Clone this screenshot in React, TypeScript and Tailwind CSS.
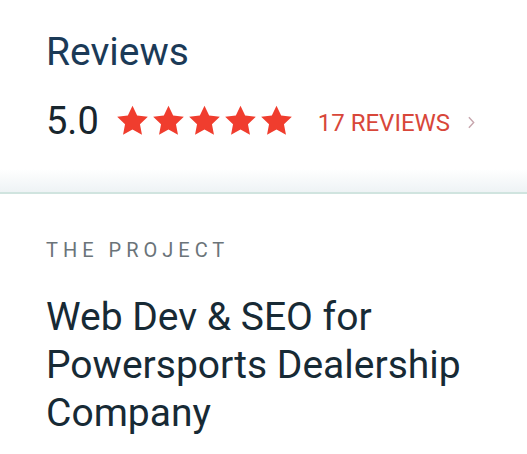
const Star = () => (
  <svg viewBox="0 0 24 24" className="w-[33px] h-[32px]" fill="#f03d2e">
    <path d="M12 .6l3.5 7.3 8 1-5.9 5.5 1.5 7.9L12 18.4l-7.1 3.9 1.5-7.9L.5 8.9l8-1z" />
  </svg>
);

export default function App() {
  return (
    <div className="w-[527px] h-[454px] bg-white overflow-hidden font-['Roboto',_'Liberation_Sans',_sans-serif]">
      {/* Reviews summary */}
      <div className="px-[46px] pt-[29px] pb-[51px] bg-gradient-to-b from-white from-[88%] to-[#eef3f5]">
        <h2 className="text-[39px] leading-[46px] text-[#1b3a57]">Reviews</h2>
        <div className="flex items-center mt-[26px] h-[40px]">
          <span className="text-[38px] leading-[40px] text-[#18262e]">5.0</span>
          <div className="flex gap-[3px] ml-[17px]">
            <Star />
            <Star />
            <Star />
            <Star />
            <Star />
          </div>
          <span className="ml-[25px] text-[24px] leading-none text-[#d8473a] pt-[4px]">17 REVIEWS</span>
          <svg viewBox="0 0 8 14" className="ml-[18px] w-[7px] h-[13px] mt-[3px]" fill="none" stroke="#c7a6ad" strokeWidth="1.6">
            <path d="M1 1l5.5 6L1 13" />
          </svg>
        </div>
      </div>
      <div className="h-[2px] bg-[#d0e4df]" />

      {/* Project */}
      <div className="px-[46px] pt-[44px]">
        <p className="text-[20px] leading-[24px] tracking-[5px] text-[#6b7479]">THE PROJECT</p>
        <h1 className="mt-[31px] text-[39px] leading-[48px] text-[#172a35]">
          Web Dev &amp; SEO for Powersports Dealership Company
        </h1>
      </div>
    </div>
  );
}
